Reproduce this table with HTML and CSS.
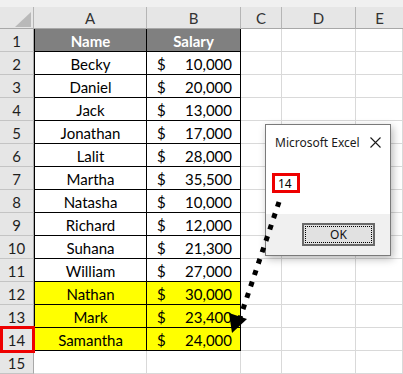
FILE: index.html
```html
<!DOCTYPE html>
<html>
<head>
<meta charset="utf-8">
<link rel="stylesheet" href="styles.css">
</head>
<body>
<div class="page">
  <div class="strip"></div>
  <div class="sheet">
    <div class="corner"><svg width="34" height="22" viewBox="0 0 34 22"><polygon points="15,20 31,5 31,20" fill="#b9b9b9"/></svg></div>
    <div class="ch">A</div><div class="ch">B</div><div class="ch">C</div><div class="ch">D</div><div class="ch last">E</div>

    <div class="rh">1</div><div class="c a hd">Name</div><div class="c b hd ctr">Salary</div><div class="c"></div><div class="c"></div><div class="c"></div>
    <div class="rh">2</div><div class="c a">Becky</div><div class="c b"><span>$</span><span>10,000</span></div><div class="c"></div><div class="c"></div><div class="c"></div>
    <div class="rh">3</div><div class="c a">Daniel</div><div class="c b"><span>$</span><span>20,000</span></div><div class="c"></div><div class="c"></div><div class="c"></div>
    <div class="rh">4</div><div class="c a">Jack</div><div class="c b"><span>$</span><span>13,000</span></div><div class="c"></div><div class="c"></div><div class="c"></div>
    <div class="rh">5</div><div class="c a">Jonathan</div><div class="c b"><span>$</span><span>17,000</span></div><div class="c"></div><div class="c"></div><div class="c"></div>
    <div class="rh">6</div><div class="c a">Lalit</div><div class="c b"><span>$</span><span>28,000</span></div><div class="c"></div><div class="c"></div><div class="c"></div>
    <div class="rh">7</div><div class="c a">Martha</div><div class="c b"><span>$</span><span>35,500</span></div><div class="c"></div><div class="c"></div><div class="c"></div>
    <div class="rh">8</div><div class="c a">Natasha</div><div class="c b"><span>$</span><span>10,000</span></div><div class="c"></div><div class="c"></div><div class="c"></div>
    <div class="rh">9</div><div class="c a">Richard</div><div class="c b"><span>$</span><span>12,000</span></div><div class="c"></div><div class="c"></div><div class="c"></div>
    <div class="rh">10</div><div class="c a">Suhana</div><div class="c b"><span>$</span><span>21,300</span></div><div class="c"></div><div class="c"></div><div class="c"></div>
    <div class="rh">11</div><div class="c a">William</div><div class="c b"><span>$</span><span>27,000</span></div><div class="c"></div><div class="c"></div><div class="c"></div>
    <div class="rh">12</div><div class="c a yl">Nathan</div><div class="c b yl"><span>$</span><span>30,000</span></div><div class="c"></div><div class="c"></div><div class="c"></div>
    <div class="rh">13</div><div class="c a yl">Mark</div><div class="c b yl"><span>$</span><span>23,400</span></div><div class="c"></div><div class="c"></div><div class="c"></div>
    <div class="rh">14</div><div class="c a yl">Samantha</div><div class="c b yl"><span>$</span><span>24,000</span></div><div class="c"></div><div class="c"></div><div class="c"></div>
    <div class="rh">15</div><div class="c"></div><div class="c"></div><div class="c"></div><div class="c"></div><div class="c"></div>
  </div>

  <div class="rowmark"></div>

  <div class="dlg">
    <div class="dlg-title">
      <span>Microsoft Excel</span>
      <svg class="close" width="11" height="11" viewBox="0 0 11 11"><path d="M0.5 0.5 L10.5 10.5 M10.5 0.5 L0.5 10.5" stroke="#1a1a1a" stroke-width="1.1" fill="none"/></svg>
    </div>
    <div class="dlg-body"><div class="msg">14</div></div>
    <div class="dlg-foot"><div class="btn"><span class="focus">OK</span></div></div>
  </div>

  <svg class="arrow" width="403" height="374" viewBox="0 0 403 374">
    <line x1="279" y1="202" x2="240" y2="318" stroke="#000" stroke-width="5" stroke-dasharray="5 7"/>
    <polygon points="232,333 229,313 247,319" fill="#000"/>
  </svg>
</div>
</body>
</html>
```

FILE: styles.css
```css
html, body {
  margin: 0;
  padding: 0;
  background: #ffffff;
}
.page {
  position: relative;
  width: 403px;
  height: 374px;
  overflow: hidden;
  font-family: Lato, "Open Sans", sans-serif;
}
.strip {
  height: 7px;
  background: #f0f0f0;
}
.sheet {
  display: grid;
  grid-template-columns: 34px 113px 94px 41px 74px 47px;
  grid-template-rows: 22px;
  grid-auto-rows: 23px;
}
.sheet > div {
  box-sizing: border-box;
}
.corner {
  background: #e6e6e6;
  border-right: 1px solid #b5b5b5;
  border-bottom: 1px solid #a8a8a8;
}
.corner svg {
  display: block;
}
.ch {
  background: #e6e6e6;
  border-right: 1px solid #b5b5b5;
  border-bottom: 1px solid #a8a8a8;
  color: #333;
  font-size: 15px;
  display: flex;
  align-items: center;
  justify-content: center;
}
.ch.last {
  border-right: none;
}
.rh {
  background: #e6e6e6;
  border-right: 1px solid #a8a8a8;
  border-bottom: 1px solid #c4c4c4;
  color: #1f1f1f;
  font-size: 15px;
  display: flex;
  align-items: center;
  justify-content: center;
  padding-top: 1px;
}
.c {
  border-right: 1px solid #d9d9d9;
  border-bottom: 1px solid #d9d9d9;
  font-size: 15px;
  color: #000;
  display: flex;
  align-items: center;
  padding-top: 1px;
}
.c.a {
  justify-content: center;
  border-left: 1px solid #000;
  border-right: 1px solid #000;
  border-bottom: 1px solid #000;
}
.c.b {
  justify-content: space-between;
  padding: 1px 8px 0 10px;
  border-right: 1px solid #000;
  border-bottom: 1px solid #000;
}
.c.hd {
  background: #808080;
  color: #ffffff;
  font-weight: bold;
}
.c.b.ctr {
  justify-content: center;
  padding: 1px 0 0 0;
}
.c.yl {
  background: #ffff00;
}
.rowmark {
  position: absolute;
  left: 0;
  top: 326px;
  width: 35px;
  height: 27px;
  box-sizing: border-box;
  border: 3px solid #ee0000;
}
.dlg {
  position: absolute;
  left: 265px;
  top: 124px;
  width: 126px;
  height: 132px;
  box-sizing: border-box;
  border: 1px solid #7a7a7a;
  background: #ffffff;
  box-shadow: 2px 3px 8px rgba(0, 0, 0, 0.28);
  display: flex;
  flex-direction: column;
  font-family: "Noto Sans", "Open Sans", sans-serif;
}
.dlg-title {
  height: 32px;
  display: flex;
  align-items: center;
  justify-content: space-between;
  padding: 0 9px 0 9px;
  font-size: 12px;
  color: #1a1a1a;
}
.dlg-title span {
  position: relative;
  top: 1px;
}
.close {
  display: block;
  margin-top: 2px;
}
.dlg-body {
  height: 57px;
  box-sizing: border-box;
  padding: 16px 0 0 6px;
}
.msg {
  width: 28px;
  height: 20px;
  box-sizing: border-box;
  border: 3px solid #ee0000;
  font-size: 12px;
  color: #000;
  display: flex;
  align-items: center;
  padding-left: 3px;
}
.dlg-foot {
  flex: 1;
  background: #f0f0f0;
  display: flex;
  justify-content: flex-end;
  align-items: flex-start;
  padding: 9px 15px 0 0;
}
.btn {
  width: 73px;
  height: 23px;
  box-sizing: border-box;
  border: 2px solid #6a6a6a;
  background: #e1e1e1;
  padding: 1px;
  display: flex;
}
.focus {
  flex: 1;
  border: 1px dotted #000;
  display: flex;
  align-items: center;
  justify-content: center;
  font-size: 12px;
  color: #111;
}
.arrow {
  position: absolute;
  left: 0;
  top: 0;
  pointer-events: none;
}
```
